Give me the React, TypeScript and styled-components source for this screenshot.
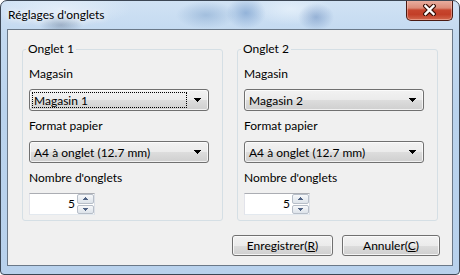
import React from 'react';
import styled, { createGlobalStyle } from 'styled-components';

const GlobalStyle = createGlobalStyle`
  html, body { margin: 0; padding: 0; background: #ffffff; }
  body { font-family: Lato, "Segoe UI", "Noto Sans", sans-serif; font-size: 12px; color: #000; }
  #root { width: 460px; height: 275px; }
`;

const Window = styled.div`
  position: relative;
  box-sizing: border-box;
  width: 460px;
  height: 275px;
  border: 1px solid #3b4654;
  border-radius: 7px 7px 4px 4px;
  padding: 0 6px 8px 6px;
  display: flex;
  flex-direction: column;
  overflow: hidden;
  background:
    radial-gradient(ellipse 22px 10px at 60px 24px, rgba(120, 140, 165, 0.55), rgba(120, 140, 165, 0) 100%),
    radial-gradient(ellipse 30px 14px at 205px 14px, rgba(130, 165, 205, 0.55), rgba(130, 165, 205, 0) 100%),
    radial-gradient(ellipse 20px 16px at 245px 12px, rgba(110, 150, 200, 0.6), rgba(110, 150, 200, 0) 100%),
    radial-gradient(ellipse 18px 14px at 315px 16px, rgba(105, 140, 190, 0.55), rgba(105, 140, 190, 0) 100%),
    radial-gradient(ellipse 40px 16px at 290px 8px, rgba(235, 244, 252, 0.7), rgba(235, 244, 252, 0) 100%),
    radial-gradient(ellipse 70px 18px at 60px 8px, rgba(232, 241, 250, 0.8), rgba(232, 241, 250, 0) 100%),
    linear-gradient(180deg, #d0e2f4 0%, #c3d9f0 12%, #bad3ed 40%, #b8d1ec 100%);
`;

const TitleBar = styled.div`
  height: 28px;
  box-sizing: border-box;
  padding: 6px 0 0 1px;
  display: flex;
  align-items: flex-start;
`;

const Title = styled.span`
  font-size: 12px;
  line-height: 16px;
  color: #000;
  text-shadow: 0 0 6px rgba(255, 255, 255, 0.95), 0 0 10px rgba(255, 255, 255, 0.8);
`;

const CloseButton = styled.div`
  position: absolute;
  top: -1px;
  right: 6px;
  width: 47px;
  height: 21px;
  box-sizing: border-box;
  border: 1px solid #4a1a12;
  border-top: none;
  border-radius: 0 0 5px 5px;
  display: flex;
  align-items: center;
  justify-content: center;
  background: linear-gradient(180deg, #eab2a4 0%, #dc8b78 40%, #c7462f 50%, #c23e27 72%, #d2684e 100%);
  box-shadow: inset 0 0 0 1px rgba(255, 210, 200, 0.45);
`;

const Client = styled.div`
  flex: 1;
  background: #f0f0f0;
  border: 1px solid #6a7888;
  padding: 19px 12px 0 14px;
  display: flex;
  flex-direction: column;
`;

const Groups = styled.div`
  display: grid;
  grid-template-columns: 201px 201px;
  column-gap: 14px;
`;

const Group = styled.div`
  position: relative;
  box-sizing: border-box;
  height: 172px;
  border: 1px solid #d5dfe5;
  border-radius: 3px;
  padding: 16px 13px 5px 6px;
  display: flex;
  flex-direction: column;
  gap: 7px;
`;

const Legend = styled.span`
  position: absolute;
  top: -9px;
  left: 3px;
  padding: 0 2px;
  line-height: 16px;
  background: #f0f0f0;
`;

const FieldLabel = styled.div`
  line-height: 16px;
  height: 16px;
`;

const Combo = styled.div`
  box-sizing: border-box;
  width: 180px;
  height: 22px;
  border: 1px solid #707070;
  border-radius: 3px;
  background: linear-gradient(180deg, #f2f2f2 0%, #ebebeb 50%, #dddddd 50%, #cfcfcf 100%);
  box-shadow: inset 0 0 0 1px rgba(255, 255, 255, 0.7);
  display: flex;
  align-items: stretch;
  padding: 1px;
`;

const ComboText = styled.div<{ $focused?: boolean }>`
  flex: 1;
  margin: 1px 0 1px 1px;
  padding-left: 1px;
  border: 1px dotted ${(p) => (p.$focused ? '#000' : 'transparent')};
  line-height: 16px;
  white-space: nowrap;
`;

const ComboArrow = styled.div`
  width: 19px;
  display: flex;
  align-items: center;
  justify-content: center;
  padding-left: 1px;
`;

const Spin = styled.div`
  box-sizing: border-box;
  width: 66px;
  height: 22px;
  border: 1px solid;
  border-color: #abadb3 #dbdfe6 #e3e9ef #e2e3ea;
  background: #fff;
  display: flex;
  align-items: stretch;
`;

const SpinValue = styled.div`
  flex: 1;
  text-align: right;
  line-height: 20px;
  padding-right: 2px;
`;

const SpinButtons = styled.div`
  width: 17px;
  display: flex;
  flex-direction: column;
  gap: 1px;
  padding: 0;
`;

const SpinBtn = styled.div`
  flex: 1;
  box-sizing: border-box;
  border: 1px solid #b7bec8;
  border-radius: 2px;
  background: linear-gradient(180deg, #f7f8fa 0%, #e9edf2 50%, #dde3ea 100%);
  display: flex;
  align-items: center;
  justify-content: center;
`;

const ButtonRow = styled.div`
  margin-top: 14px;
  display: flex;
  justify-content: flex-end;
  gap: 9px;
`;

const Button = styled.button<{ $w: number }>`
  width: ${(p) => p.$w}px;
  height: 21px;
  box-sizing: border-box;
  border: 1px solid #707070;
  border-radius: 3px;
  background: linear-gradient(180deg, #f2f2f2 0%, #ebebeb 50%, #dddddd 50%, #cfcfcf 100%);
  box-shadow: inset 0 0 0 1px rgba(252, 252, 252, 0.8);
  font: inherit;
  font-size: 12px;
  color: #000;
  padding: 0;
  line-height: 17px;
`;

const Mnemonic = styled.span`
  text-decoration: underline;
`;

const DownArrow = () => (
  <svg width="7" height="4" viewBox="0 0 7 4" shapeRendering="crispEdges">
    <rect x="0" y="0" width="7" height="1" fill="#000" />
    <rect x="1" y="1" width="5" height="1" fill="#000" />
    <rect x="2" y="2" width="3" height="1" fill="#000" />
    <rect x="3" y="3" width="1" height="1" fill="#000" />
  </svg>
);

const SpinArrow = ({ up }: { up?: boolean }) => (
  <svg width="5" height="3" viewBox="0 0 5 3" shapeRendering="crispEdges" style={{ transform: up ? 'none' : 'scaleY(-1)' }}>
    <rect x="2" y="0" width="1" height="1" fill="#4f6283" />
    <rect x="1" y="1" width="3" height="1" fill="#4f6283" />
    <rect x="0" y="2" width="5" height="1" fill="#4f6283" />
  </svg>
);

const CloseX = () => (
  <svg width="13" height="12" viewBox="0 0 13 12">
    <path d="M2.5 2 L10.5 10 M10.5 2 L2.5 10" stroke="#3d1209" strokeWidth="4.6" strokeLinecap="square" />
    <path d="M2.5 2 L10.5 10 M10.5 2 L2.5 10" stroke="#ffffff" strokeWidth="2.4" strokeLinecap="square" />
  </svg>
);

type TabProps = { title: string; tray: string; focused?: boolean };

const TabGroup = ({ title, tray, focused }: TabProps) => (
  <Group>
    <Legend>{title}</Legend>
    <FieldLabel>Magasin</FieldLabel>
    <Combo>
      <ComboText $focused={focused}>{tray}</ComboText>
      <ComboArrow>
        <DownArrow />
      </ComboArrow>
    </Combo>
    <FieldLabel>Format papier</FieldLabel>
    <Combo>
      <ComboText>A4 à onglet (12.7 mm)</ComboText>
      <ComboArrow>
        <DownArrow />
      </ComboArrow>
    </Combo>
    <FieldLabel>Nombre d'onglets</FieldLabel>
    <Spin>
      <SpinValue>5</SpinValue>
      <SpinButtons>
        <SpinBtn>
          <SpinArrow up />
        </SpinBtn>
        <SpinBtn>
          <SpinArrow />
        </SpinBtn>
      </SpinButtons>
    </Spin>
  </Group>
);

export default function App() {
  return (
    <>
      <GlobalStyle />
      <Window>
        <TitleBar>
          <Title>Réglages d'onglets</Title>
        </TitleBar>
        <CloseButton>
          <CloseX />
        </CloseButton>
        <Client>
          <Groups>
            <TabGroup title="Onglet 1" tray="Magasin 1" focused />
            <TabGroup title="Onglet 2" tray="Magasin 2" />
          </Groups>
          <ButtonRow>
            <Button $w={101}>
              Enregistrer(<Mnemonic>R</Mnemonic>)
            </Button>
            <Button $w={98}>
              Annuler(<Mnemonic>C</Mnemonic>)
            </Button>
          </ButtonRow>
        </Client>
      </Window>
    </>
  );
}
